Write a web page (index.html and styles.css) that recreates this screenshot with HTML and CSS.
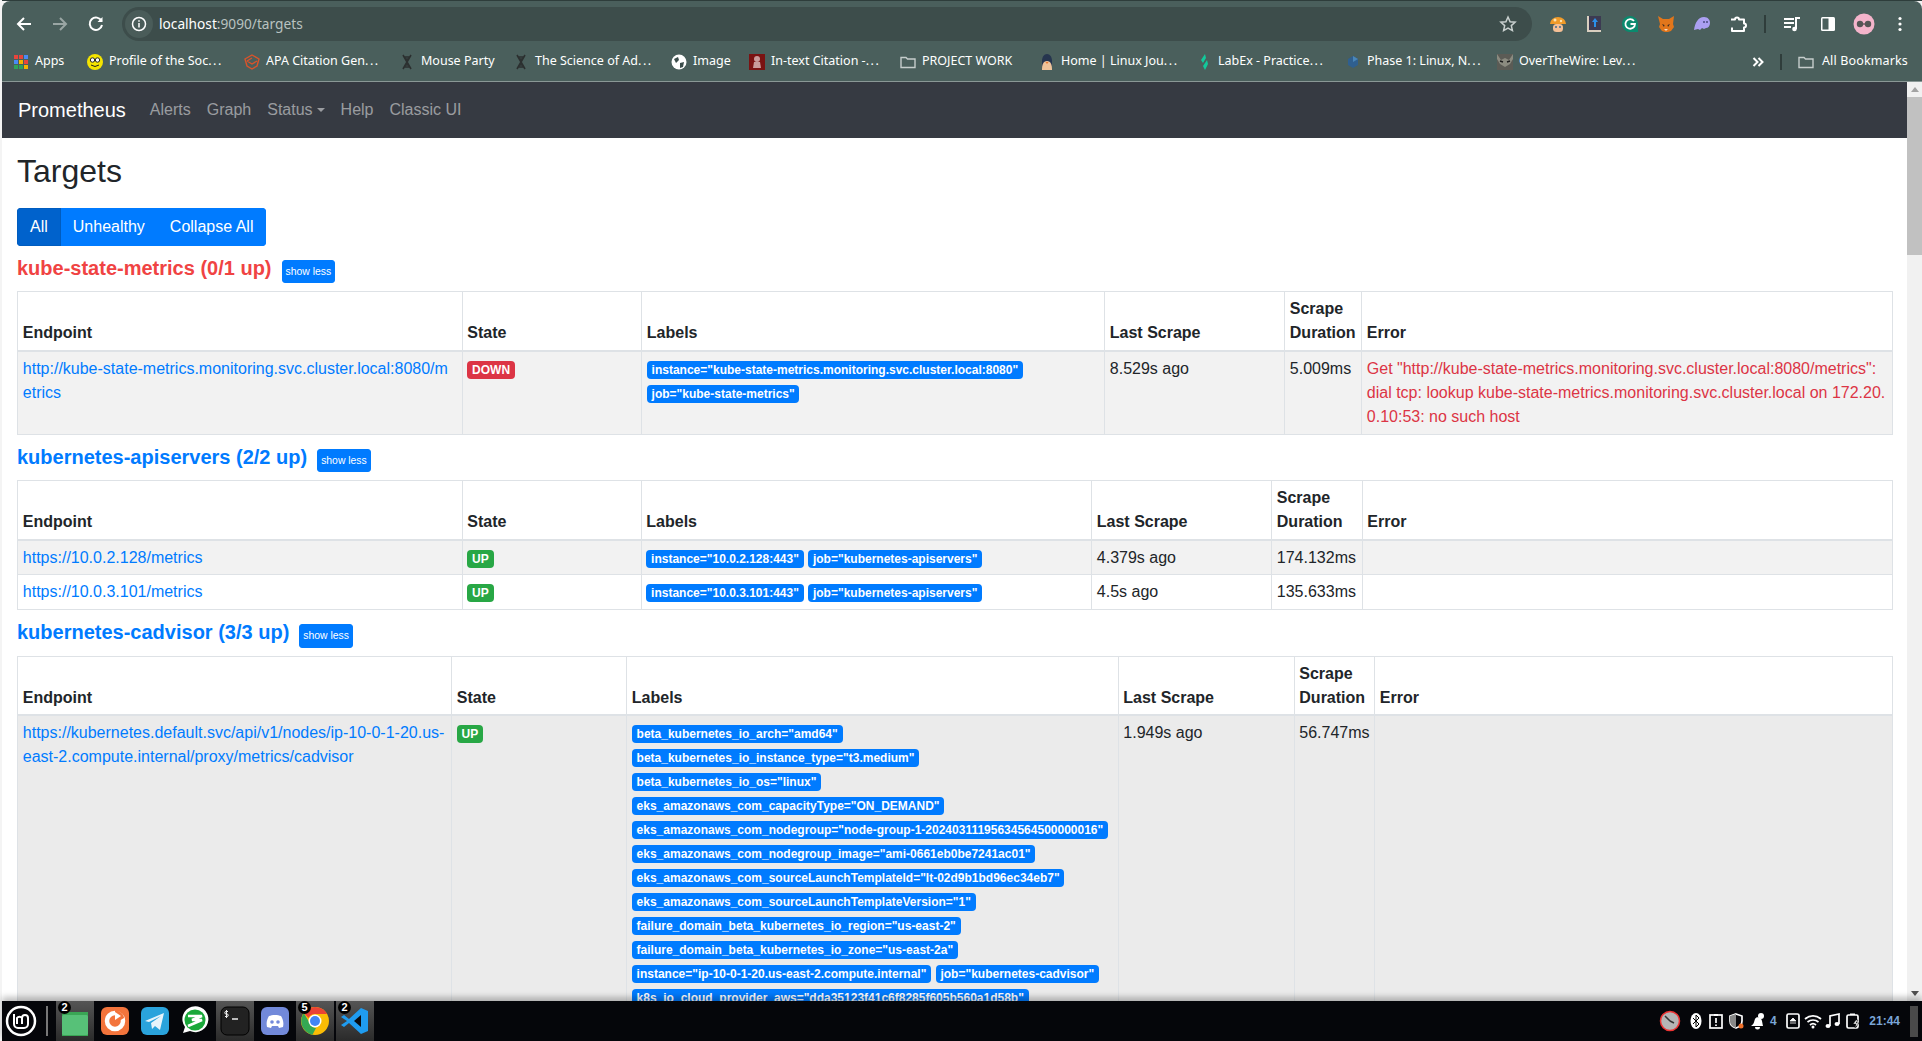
FILE: index.html
```html
<!DOCTYPE html>
<html lang="en">
<head>
  <meta charset="UTF-8" />
  <title>Prometheus Time Series Collection and Processing Server</title>
  <link rel="stylesheet" href="styles.css">
</head>
<body>
<div class="screen">

  <!-- Browser toolbar -->
  <div class="top-strip"></div>
  <div class="toolbar">
    <div class="tile"><svg width="18" height="18" viewBox="0 0 18 18"><path d="M16 9H3M9 3L3 9l6 6" class="ic-white"/></svg></div>
    <div class="tile"><svg width="18" height="18" viewBox="0 0 18 18"><path d="M2 9h13M9 3l6 6-6 6" class="ic-dim"/></svg></div>
    <div class="tile"><svg width="18" height="18" viewBox="0 0 18 18"><path d="M14.5 6A6.2 6.2 0 1 0 15 10" class="ic-white"/><path d="M15.5 2v5h-5z" fill="#fff"/></svg></div>
    <div class="address">
      <span class="site-info"><svg width="16" height="16" viewBox="0 0 16 16"><circle cx="8" cy="8" r="6.5" class="ic-thin"/><path d="M8 7v4.5M8 4.2v1.6" class="ic-thin"/></svg></span>
      <span class="url">localhost<span class="url-rest">:9090/targets</span></span>
      <svg class="star" width="18" height="18" viewBox="0 0 18 18"><path d="M9 2l2.1 4.7 5 .5-3.8 3.4 1.1 5L9 13l-4.4 2.6 1.1-5L1.9 7.200l5-.5z" class="ic-star"/></svg>
    </div>
    <div class="tile ext"><svg width="18" height="18" viewBox="0 0 18 18"><path d="M1 9a8 7 0 0 1 16 0z" fill="#f09a28"/><circle cx="6" cy="5" r="1.500" fill="#fde3b0"/><circle cx="12" cy="6" r="1.200" fill="#fde3b0"/><rect x="4" y="9" width="10" height="8" rx="3.500" fill="#f5bf95"/><path d="M6 12h2M10 12h2" stroke="#6d7f8f" stroke-width="2"/></svg></div>
    <div class="tile"><svg width="18" height="18" viewBox="0 0 18 18"><rect x="2" y="1" width="14" height="16" fill="#d9cfc0"/><rect x="4" y="1" width="12" height="14" fill="#3c3a52"/><path d="M10 3l3 4h-2v5H9V7H7z" fill="#2b8fe8"/></svg></div>
    <div class="tile"><svg width="18" height="18" viewBox="0 0 18 18"><path d="M1 9a8 8 0 0 1 16 0v8H9a8 8 0 0 1-8-8z" fill="#0a8a6e"/><path d="M13 6a4.800 4.800 0 1 0 1 3H9.500" fill="none" stroke="#fff" stroke-width="1.800"/></svg></div>
    <div class="tile"><svg width="18" height="18" viewBox="0 0 18 18"><path d="M1 1l5 3h6l5-3-1 8 1 3-3 4-3 1H8l-3-1-3-4 1-3z" fill="#e2761b"/><path d="M5 9l2.500 1L7 12zM13 9l-2.500 1 .5 2z" fill="#3a2a20"/><path d="M7 14h4l-2 2z" fill="#f4d8bd"/></svg></div>
    <div class="tile"><svg width="18" height="18" viewBox="0 0 18 18"><path d="M1 15C2 8 5 2 11 2c4 0 6 3 6 6 0 3-2 5-4 5l-2 1-2-1-2 2-2-1z" fill="#ab9ff2"/><circle cx="11" cy="7" r="1" fill="#4a4a80"/><circle cx="14" cy="7" r="1" fill="#4a4a80"/></svg></div>
    <div class="tile"><svg width="18" height="18" viewBox="0 0 18 18"><path d="M2 4.500h4a2 2 0 0 1 4 0h5v4a2 2 0 0 1 0 4v3.500H3v-3.500" class="ic-white" stroke-linejoin="round"/></svg></div>
    <div class="tool-divider"></div>
    <div class="tile"><svg width="18" height="18" viewBox="0 0 18 18"><path d="M1 4h10M1 8h10M1 12h7" class="ic-white"/><path d="M13 14V3h4" class="ic-white"/><circle cx="11.500" cy="14" r="2.300" fill="#fff"/></svg></div>
    <div class="tile"><svg width="18" height="18" viewBox="0 0 18 18"><rect x="2" y="2" width="14" height="14" rx="1.500" fill="#fff"/><rect x="3.500" y="3.500" width="6" height="11" fill="#4a5f5c"/></svg></div>
    <div class="tile"><svg width="22" height="22" viewBox="0 0 22 22"><circle cx="11" cy="11" r="10.500" fill="#f4b4cb"/><circle cx="7" cy="11" r="3.200" fill="#555"/><circle cx="15" cy="11" r="3.200" fill="#555"/><path d="M10 11h2" stroke="#333"/></svg></div>
    <div class="tile"><svg width="18" height="18" viewBox="0 0 18 18"><circle cx="9" cy="3.500" r="1.600" fill="#fff"/><circle cx="9" cy="9" r="1.600" fill="#fff"/><circle cx="9" cy="14.500" r="1.600" fill="#fff"/></svg></div>
  </div>

  <!-- Bookmarks bar -->
  <div class="bookmarks">
    <div class="bookmark-grid">
      <a class="bookmark"><svg width="16" height="16" viewBox="0 0 16 16"><rect x="1" y="1" width="4" height="4" fill="#e8453c"/><rect x="6" y="1" width="4" height="4" fill="#e8453c"/><rect x="11" y="1" width="4" height="4" fill="#4a8af4"/><rect x="1" y="6" width="4" height="4" fill="#4a8af4"/><rect x="6" y="6" width="4" height="4" fill="#f4b400"/><rect x="11" y="6" width="4" height="4" fill="#e8453c"/><rect x="1" y="11" width="4" height="4" fill="#2fa35a"/><rect x="6" y="11" width="4" height="4" fill="#2fa35a"/><rect x="11" y="11" width="4" height="4" fill="#f4b400"/></svg><span>Apps</span></a>
      <a class="bookmark"><svg width="16" height="16" viewBox="0 0 16 16"><circle cx="8" cy="8" r="8" fill="#f4e400"/><circle cx="5.500" cy="6" r="2.200" fill="#fff" stroke="#222"/><circle cx="10.500" cy="6" r="2.200" fill="#fff" stroke="#222"/><path d="M4 11q4 3 8 0" fill="none" stroke="#222"/></svg><span>Profile of the Soc<span class="ell">...</span></span></a>
      <a class="bookmark"><svg width="16" height="16" viewBox="0 0 16 16"><path d="M8 1l7 4-2 7-5 3-5-3-2-7zM3 7l5 3 5-3M8 4L3 7" fill="none" stroke="#d9542b" stroke-width="1.400"/></svg><span>APA Citation Gen<span class="ell">...</span></span></a>
      <a class="bookmark"><svg width="16" height="16" viewBox="0 0 16 16"><path d="M4 1l8 14M12 1L4 15M5 3h6M6 5h4M6 11h4M5 13h6" fill="none" stroke="#2b2f2f" stroke-width="1.600"/></svg><span>Mouse Party</span></a>
      <a class="bookmark"><svg width="16" height="16" viewBox="0 0 16 16"><path d="M4 1l8 14M12 1L4 15M5 3h6M6 5h4M6 11h4M5 13h6" fill="none" stroke="#2b2f2f" stroke-width="1.600"/></svg><span>The Science of Ad<span class="ell">...</span></span></a>
      <a class="bookmark"><svg width="16" height="16" viewBox="0 0 16 16"><circle cx="8" cy="8" r="7.500" fill="#fff"/><path d="M3 5l4-2 1 3-3 3zM9 9l4-1-1 5-3 1z" fill="#3b4d4b"/></svg><span>Image</span></a>
      <a class="bookmark"><svg width="16" height="16" viewBox="0 0 16 16"><rect width="16" height="16" fill="#7a1212"/><circle cx="8" cy="5" r="3" fill="#c99a9a"/><path d="M4 14l1-6h6l1 6z" fill="#c99a9a"/></svg><span>In-text Citation -<span class="ell">...</span></span></a>
      <a class="bookmark"><svg width="16" height="16" viewBox="0 0 16 16"><path d="M1 3.500h5l1.500 1.500h7.500v8.500H1z" class="ic-folder"/></svg><span>PROJECT WORK</span></a>
      <a class="bookmark"><svg width="16" height="16" viewBox="0 0 16 16"><path d="M8 0c3 0 5 3 5 7v5H3V7c0-4 2-7 5-7z" fill="#26354f"/><path d="M3 16c0-5 1-9 5-9s5 4 5 9z" fill="#eec39a"/><path d="M6.500 8h3L8 10z" fill="#e8772e"/></svg><span>Home | Linux Jou<span class="ell">...</span></span></a>
      <a class="bookmark"><svg width="16" height="16" viewBox="0 0 16 16"><path d="M9 0L5 6l2 3 3-5zM11 6l-4 6 2 4 3-6z" fill="#12c99b"/></svg><span>LabEx - Practice<span class="ell">...</span></span></a>
      <a class="bookmark"><svg width="16" height="16" viewBox="0 0 16 16"><path d="M8 2l5 3v6l-5 3-5-3V5z" fill="#2f5f8f"/><path d="M8 2v6l5-3" fill="#4a86b8"/></svg><span>Phase 1: Linux, N<span class="ell">...</span></span></a>
      <a class="bookmark"><svg width="16" height="16" viewBox="0 0 16 16"><rect width="16" height="16" fill="#5b5b55"/><path d="M0 0l4 6 4-2 4 2 4-6v5l-3 5-5 3-5-3-3-5z" fill="#8b8b80"/><path d="M3 7l3 1M13 7l-3 1" stroke="#1c1c1c" stroke-width="1.500"/></svg><span>OverTheWire: Lev<span class="ell">...</span></span></a>
    </div>
    <div class="bookmarks-end">
      <svg width="12" height="12" viewBox="0 0 12 12"><path d="M1.500 2l4 4-4 4M6.500 2l4 4-4 4" class="ic-white"/></svg>
      <span class="marks-divider"></span>
      <a class="bookmark marks-all"><svg width="16" height="16" viewBox="0 0 16 16"><path d="M1 3.500h5l1.500 1.500h7.500v8.500H1z" class="ic-folder"/></svg><span>All Bookmarks</span></a>
    </div>
  </div>

  <!-- Page and its scrollbar -->
  <div class="viewport">
    <div class="page">
      <nav class="navbar">
        <span class="brand">Prometheus</span>
        <a class="nav-link">Alerts</a>
        <a class="nav-link">Graph</a>
        <a class="nav-link">Status<span class="caret"></span></a>
        <a class="nav-link">Help</a>
        <a class="nav-link">Classic UI</a>
      </nav>

      <div class="container">
        <h1>Targets</h1>
        <div class="btn-group">
          <button class="btn btn-active">All</button><button class="btn">Unhealthy</button><button class="btn">Collapse All</button>
        </div>

        <div class="pool-head">
          <a class="pool-title pool-down">kube-state-metrics (0/1 up)</a>
          <button class="show-less">show less</button>
        </div>
        <table class="targets">
          <colgroup><col class="a1"><col class="a2"><col class="a3"><col class="a4"><col class="a5"><col class="a6"></colgroup>
          <thead><tr><th>Endpoint</th><th>State</th><th>Labels</th><th>Last Scrape</th><th>Scrape Duration</th><th>Error</th></tr></thead>
          <tbody>
            <tr class="striped">
              <td class="breaks"><a class="endpoint">http://kube-state-metrics.monitoring.svc.cluster.local:8080/metrics</a></td>
              <td><span class="badge badge-down">DOWN</span></td>
              <td><span class="badge">instance="kube-state-metrics.monitoring.svc.cluster.local:8080"</span> <span class="badge">job="kube-state-metrics"</span></td>
              <td>8.529s ago</td>
              <td>5.009ms</td>
              <td class="breaks error">Get "http://kube-state-metrics.monitoring.svc.cluster.local:8080/metrics": dial tcp: lookup kube-state-metrics.monitoring.svc.cluster.local on 172.20.0.10:53: no such host</td>
            </tr>
          </tbody>
        </table>

        <div class="pool-head">
          <a class="pool-title">kubernetes-apiservers (2/2 up)</a>
          <button class="show-less">show less</button>
        </div>
        <table class="targets">
          <colgroup><col class="b1"><col class="b2"><col class="b3"><col class="b4"><col class="b5"><col class="b6"></colgroup>
          <thead><tr><th>Endpoint</th><th>State</th><th>Labels</th><th>Last Scrape</th><th>Scrape Duration</th><th>Error</th></tr></thead>
          <tbody>
            <tr class="striped">
              <td class="breaks"><a class="endpoint">https://10.0.2.128/metrics</a></td>
              <td><span class="badge badge-up">UP</span></td>
              <td><span class="badge">instance="10.0.2.128:443"</span> <span class="badge">job="kubernetes-apiservers"</span></td>
              <td>4.379s ago</td>
              <td>174.132ms</td>
              <td></td>
            </tr>
            <tr>
              <td class="breaks"><a class="endpoint">https://10.0.3.101/metrics</a></td>
              <td><span class="badge badge-up">UP</span></td>
              <td><span class="badge">instance="10.0.3.101:443"</span> <span class="badge">job="kubernetes-apiservers"</span></td>
              <td>4.5s ago</td>
              <td>135.633ms</td>
              <td></td>
            </tr>
          </tbody>
        </table>

        <div class="pool-head">
          <a class="pool-title">kubernetes-cadvisor (3/3 up)</a>
          <button class="show-less">show less</button>
        </div>
        <table class="targets">
          <colgroup><col class="c1"><col class="c2"><col class="c3"><col class="c4"><col class="c5"><col class="c6"></colgroup>
          <thead><tr><th>Endpoint</th><th>State</th><th>Labels</th><th>Last Scrape</th><th>Scrape Duration</th><th>Error</th></tr></thead>
          <tbody>
            <tr class="hovered">
              <td class="breaks"><a class="endpoint">https://kubernetes.default.svc/api/v1/nodes/ip-10-0-1-20.us-east-2.compute.internal/proxy/metrics/cadvisor</a></td>
              <td><span class="badge badge-up">UP</span></td>
              <td>
                <span class="badge">beta_kubernetes_io_arch="amd64"</span>
                <span class="badge">beta_kubernetes_io_instance_type="t3.medium"</span>
                <span class="badge">beta_kubernetes_io_os="linux"</span>
                <span class="badge">eks_amazonaws_com_capacityType="ON_DEMAND"</span>
                <span class="badge">eks_amazonaws_com_nodegroup="node-group-1-20240311195634564500000016"</span>
                <span class="badge">eks_amazonaws_com_nodegroup_image="ami-0661eb0be7241ac01"</span>
                <span class="badge">eks_amazonaws_com_sourceLaunchTemplateId="lt-02d9b1bd96ec34eb7"</span>
                <span class="badge">eks_amazonaws_com_sourceLaunchTemplateVersion="1"</span>
                <span class="badge">failure_domain_beta_kubernetes_io_region="us-east-2"</span>
                <span class="badge">failure_domain_beta_kubernetes_io_zone="us-east-2a"</span>
                <span class="badge">instance="ip-10-0-1-20.us-east-2.compute.internal"</span>
                <span class="badge">job="kubernetes-cadvisor"</span>
                <span class="badge">k8s_io_cloud_provider_aws="dda35123f41c6f8285f605b560a1d58b"</span>
              </td>
              <td>1.949s ago</td>
              <td>56.747ms</td>
              <td></td>
            </tr>
          </tbody>
        </table>
      </div>
    </div>

    <div class="scrollbar">
      <div class="arrow-up"></div>
      <div class="thumb"></div>
      <div class="arrow-down"></div>
    </div>
  </div>

  <!-- Desktop panel -->
  <div class="dock">
    <div class="dock-logo"><svg width="32" height="32" viewBox="0 0 32 32"><circle cx="16" cy="16" r="14" fill="none" stroke="#fff" stroke-width="2.500"/><path d="M9 9v10a4 4 0 0 0 4 4h6a4 4 0 0 0 4-4v-6a3 3 0 0 0-6 0v6M17 13a3 3 0 0 0-5 0v6" fill="none" stroke="#fff" stroke-width="2"/></svg></div>
    <div class="dock-divider"></div>
    <div class="dock-tile dock-active"><span class="dock-count">2</span><svg width="30" height="30" viewBox="0 0 30 30"><path d="M2 6l5-3 3 3h18v24H2z" fill="#3aa655"/><rect x="2" y="9" width="26" height="20" rx="1.500" fill="#57c178"/></svg></div>
    <div class="dock-tile"><svg width="30" height="30" viewBox="0 0 30 30"><rect x="1" y="1" width="28" height="28" rx="6" fill="#f3743c"/><circle cx="15" cy="15" r="8" fill="none" stroke="#fff" stroke-width="4.500"/><path d="M15 4c5 1 9 4 9 8l-5 3c-1-3-2-4-4-4z" fill="#f3743c"/><path d="M15 6l6 4-6 4z" fill="#fff"/></svg></div>
    <div class="dock-tile"><svg width="30" height="30" viewBox="0 0 30 30"><rect x="1" y="1" width="28" height="28" rx="6" fill="#2aa3dc"/><path d="M5 15l19-8-4 17-5-4-3 3-1-6 10-7-12 6z" fill="#e8f4fb"/></svg></div>
    <div class="dock-tile"><svg width="30" height="30" viewBox="0 0 30 30"><path d="M3 27l2-6a13 13 0 1 1 5 4z" fill="#fff"/><circle cx="15" cy="14" r="10.500" fill="#1aa83a"/><path d="M8 10h14l-10 4h10l-14 6" fill="none" stroke="#fff" stroke-width="2.500"/></svg></div>
    <div class="dock-tile dock-active"><svg width="30" height="30" viewBox="0 0 30 30"><rect x="1" y="1" width="28" height="28" rx="6" fill="#222" stroke="#000"/><path d="M12 13h6" stroke="#eee" stroke-width="1.500"/><path d="M8 5.500H6a1 1 0 0 0 0 2.500h1a1 1 0 0 1 0 2.500H5M6.500 4v8" fill="none" stroke="#eee"/></svg></div>
    <div class="dock-tile"><svg width="30" height="30" viewBox="0 0 30 30"><rect x="1" y="1" width="28" height="28" rx="6" fill="#7289da"/><path d="M7 21c-1-4 0-8 2-11 3-1.500 9-1.500 12 0 2 3 3 7 2 11l-4 1-1-2h-6l-1 2z" fill="#fff"/><circle cx="12" cy="16" r="1.800" fill="#7289da"/><circle cx="18" cy="16" r="1.800" fill="#7289da"/></svg></div>
    <div class="dock-tile dock-active"><span class="dock-count">5</span><svg width="30" height="30" viewBox="0 0 30 30"><circle cx="15" cy="15" r="14" fill="#fbbc05"/><path d="M15 1a14 14 0 0 1 12.100 7H15a7 7 0 0 0-6.500 4L3.800 7A14 14 0 0 1 15 1z" fill="#ea4335"/><path d="M3.800 7l5.900 10a7 7 0 0 0 6.300 5l-3.500 6.800A14 14 0 0 1 3.800 7z" fill="#34a853"/><circle cx="15" cy="15" r="6.500" fill="#fff"/><circle cx="15" cy="15" r="5" fill="#4285f4"/></svg></div>
    <div class="dock-tile dock-active"><span class="dock-count">2</span><svg width="30" height="30" viewBox="0 0 30 30"><path d="M21 2l7 3v20l-7 3L9 17l-5 4-3-2 6-4-6-4 3-2 5 4z" fill="#1f9cf0"/><path d="M21 9l-7 6 7 6z" fill="#0b0c10"/></svg></div>

    <div class="tray">
      <svg class="tray-clock" width="22" height="22" viewBox="0 0 22 22"><circle cx="11" cy="11" r="9.500" fill="#b5b5b5" stroke="#e33" stroke-width="1.500"/><path d="M11 11L6 6M11 11l4 2" stroke="#333" stroke-width="1.500"/></svg>
      <svg class="tray-icon" width="20" height="20" viewBox="0 0 20 20"><ellipse cx="10" cy="10" rx="5.500" ry="8" fill="#fff"/><path d="M7 7l6 6-3 3V4l3 3-6 6" fill="none" stroke="#000"/></svg>
      <svg class="tray-icon" width="20" height="20" viewBox="0 0 20 20"><rect x="4" y="4" width="12" height="13" class="tray-line"/><path d="M8 3h4v2H8z" fill="#fff"/><path d="M10 7v5M10 13.500v1.500" class="tray-line"/></svg>
      <svg class="tray-icon" width="20" height="20" viewBox="0 0 20 20"><path d="M10 3l6 2v5c0 4-3 6-6 7-3-1-6-3-6-7V5z" class="tray-line"/><path d="M10 3v14c-3-1-6-3-6-7V5z" fill="#888"/><circle cx="15" cy="15" r="2.500" fill="#f0702a"/></svg>
      <svg class="tray-icon tray-bell" width="20" height="20" viewBox="0 0 20 20"><path d="M3 15c3-2 3-4 4-7 1-2 3-2 5-1 2 1 2 3 3 8z" fill="#fff"/><circle cx="13" cy="5" r="3" fill="#fff"/><path d="M7 16a2.500 2.500 0 0 0 5 0z" fill="#fff"/></svg>
      <span class="tray-count">4</span>
      <svg class="tray-icon" width="20" height="20" viewBox="0 0 20 20"><rect x="4" y="3" width="12" height="14" rx="1.500" class="tray-line"/><path d="M10 7l3 3H7zM7 12h6" fill="#fff" stroke="#fff" stroke-width=".8"/></svg>
      <svg class="tray-icon" width="20" height="20" viewBox="0 0 20 20"><path d="M2 8a12 12 0 0 1 16 0M4.500 11a8.500 8.500 0 0 1 11 0M7 14a4.500 4.500 0 0 1 6 0" class="tray-line"/><circle cx="10" cy="16" r="1.500" fill="#fff"/></svg>
      <svg class="tray-icon" width="20" height="20" viewBox="0 0 20 20"><path d="M7 15V5l9-2v10" class="tray-line"/><ellipse cx="5" cy="15" rx="2.500" ry="2" fill="#fff"/><ellipse cx="14" cy="13" rx="2.500" ry="2" fill="#fff"/></svg>
      <svg class="tray-icon" width="20" height="20" viewBox="0 0 20 20"><rect x="4" y="4" width="11" height="13" rx="1.500" class="tray-line"/><path d="M7 2.500h5V4H7z" fill="#fff"/><path d="M13 9l-3 4h3l-1 4 4-5h-3l2-3z" fill="#fff" stroke="#000" stroke-width=".5"/></svg>
      <span class="clock">21:44</span>
      <span class="panel-handle"></span>
    </div>
  </div>

</div>
</body>
</html>
```

FILE: styles.css
```css
* {
  box-sizing: border-box;
}

html, body {
  margin: 0;
  height: 100%;
  overflow: hidden;
}

body {
  font-family: "Liberation Sans", Arial, sans-serif;
  font-size: 16px;
  line-height: 1.5;
  color: #212529;
  background-color: #fff;
}

.screen {
  display: flex;
  flex-direction: column;
  width: 1922px;
  height: 1041px;
  padding-left: 2px;
  background-color: #f4f4f4;
}

/* Browser toolbar */
.top-strip {
  height: 1px;
  background-color: #2e3d3b;
}

.toolbar {
  display: flex;
  align-items: center;
  height: 40px;
  padding: 6px 0 0 4px;
  background-color: #4a5f5c;
  border-radius: 8px 8px 0 0;
}

.tile {
  display: flex;
  align-items: center;
  justify-content: center;
  width: 36px;
  height: 34px;
  flex: none;
}

.ic-white, .ic-dim, .ic-thin, .ic-star {
  fill: none;
  stroke: #fff;
  stroke-width: 2;
}

.ic-dim {
  stroke: #9aa6a4;
}

.ic-thin {
  stroke-width: 1.5;
}

.ic-star {
  stroke: #c9d0cf;
  stroke-width: 1.5;
}

.address {
  display: flex;
  align-items: center;
  width: 1410px;
  height: 34px;
  margin: 0 8px;
  padding: 0 15px 0 3px;
  flex: none;
  background-color: #3d4d4b;
  border-radius: 17px;
}

.site-info {
  display: flex;
  align-items: center;
  justify-content: center;
  width: 28px;
  height: 28px;
  border-radius: 50%;
  background-color: #4a5c59;
}

.url {
  margin-left: 6px;
  font-family: "Noto Sans", sans-serif;
  font-size: 13.7px;
  color: #fff;
}

.url-rest {
  color: #b9c2c0;
}

.star {
  margin-left: auto;
}

.tool-divider {
  width: 2px;
  height: 18px;
  margin: 0 8px;
  flex: none;
  background-color: #2f3d3b;
}

/* Bookmarks bar */
.bookmarks {
  display: flex;
  align-items: center;
  height: 41px;
  padding: 1px 14px 0 11px;
  background-color: #4a5f5c;
  border-bottom: 1px solid #8a9896;
}

.bookmark-grid {
  display: grid;
  grid-template-columns: 74px 157px 155px 114px 158px 78px 151px 139px 157px 149px 152px 160px;
}

.bookmark {
  display: flex;
  align-items: center;
  gap: 6px;
  font-family: "Noto Sans", sans-serif;
  font-size: 12.5px;
  color: #fff;
  white-space: nowrap;
}

.ell {
  letter-spacing: 1.6px;
}

.marks-all {
  gap: 8px;
  letter-spacing: 0.15px;
}

.ic-folder {
  fill: none;
  stroke: #c6cdcc;
  stroke-width: 1.4;
}

.bookmarks-end {
  display: flex;
  align-items: center;
  margin-left: auto;
}

.marks-divider {
  width: 2px;
  height: 16px;
  margin: 0 16px;
  background-color: #2f3d3b;
}

/* Page */
.viewport {
  display: flex;
  flex: 1;
  min-height: 0;
  overflow: hidden;
}

.page {
  flex: 1;
  min-width: 0;
  overflow: hidden;
  background-color: #fff;
}

.navbar {
  display: flex;
  align-items: center;
  height: 56px;
  padding: 0 16px;
  background-color: #363a42;
}

.brand {
  margin-right: 16px;
  font-size: 20px;
  color: #fff;
}

.nav-link {
  padding: 0 8px;
  color: rgba(255, 255, 255, 0.5);
}

.caret {
  display: inline-block;
  margin-left: 4px;
  vertical-align: 3px;
  border-top: 4.8px solid;
  border-left: 4.8px solid transparent;
  border-right: 4.8px solid transparent;
}

.container {
  padding: 0 15px;
}

h1 {
  margin: 14px 0 17.6px;
  font-size: 32px;
  font-weight: 500;
  line-height: 1.2;
}

.btn-group {
  display: flex;
  width: max-content;
  margin-bottom: 9.8px;
  border-radius: 4px;
  overflow: hidden;
}

.btn {
  height: 38px;
  padding: 0 12px;
  font-family: inherit;
  font-size: 16px;
  color: #fff;
  background-color: #007bff;
  border: 1px solid #007bff;
}

.btn + .btn {
  margin-left: -1px;
}

.btn-active {
  position: relative;
  background-color: #0062cc;
  border-color: #005cbf;
}

.pool-head {
  display: flex;
  align-items: baseline;
  margin-bottom: 8px;
}

.pool-title {
  font-size: 20px;
  font-weight: bold;
  line-height: 24px;
  color: #007bff;
}

.pool-down {
  color: #f04343;
}

.show-less {
  height: 23.6px;
  margin-left: 10px;
  padding: 3px;
  font-family: inherit;
  font-size: 10.4px;
  line-height: 15.6px;
  color: #fff;
  background-color: #007bff;
  border: 1px solid #007bff;
  border-radius: 3px;
}

/* Tables */
.targets {
  width: 1874.5px;
  margin-bottom: 10.1px;
  table-layout: fixed;
  border-collapse: collapse;
}

.targets th, .targets td {
  padding: 4.8px;
  text-align: left;
  vertical-align: top;
  border: 1px solid #dee2e6;
}

.targets th {
  vertical-align: bottom;
  border-bottom-width: 2px;
}

.striped td {
  background-color: #f2f2f2;
}

.hovered td {
  background-color: #ebebeb;
}

.breaks {
  word-break: break-all;
}

.endpoint {
  color: #007bff;
}

.error {
  color: #dc3545;
}

.a1 { width: 444.5px; }
.a2 { width: 179.5px; }
.a3 { width: 463px; }
.a4 { width: 180px; }
.a5 { width: 77px; }
.a6 { width: 530.5px; }

.b1 { width: 444.5px; }
.b2 { width: 179px; }
.b3 { width: 450.5px; }
.b4 { width: 180px; }
.b5 { width: 90.5px; }
.b6 { width: 530px; }

.c1 { width: 434px; }
.c2 { width: 175px; }
.c3 { width: 491.5px; }
.c4 { width: 176px; }
.c5 { width: 80.5px; }
.c6 { width: 517.5px; }

.badge {
  display: inline-block;
  padding: 3px 4.8px;
  font-size: 12px;
  font-weight: bold;
  line-height: 1;
  color: #fff;
  white-space: nowrap;
  vertical-align: baseline;
  background-color: #007bff;
  border-radius: 4px;
}

.badge-down {
  background-color: #dc3545;
}

.badge-up {
  background-color: #28a745;
}

/* Scrollbar */
.scrollbar {
  display: flex;
  flex-direction: column;
  align-items: center;
  width: 15px;
  flex: none;
  background-color: #f1f1f1;
}

.arrow-up, .arrow-down {
  width: 0;
  height: 0;
  margin: 5px 0;
  border-left: 4px solid transparent;
  border-right: 4px solid transparent;
}

.arrow-up {
  border-bottom: 5px solid #a3a3a3;
}

.arrow-down {
  margin-top: auto;
  border-top: 5px solid #505050;
}

.thumb {
  width: 100%;
  height: 158px;
  background-color: #c1c1c1;
}

/* Desktop panel */
.dock {
  position: relative;
  display: flex;
  align-items: center;
  height: 40px;
  flex: none;
  background-color: #05060a;
  box-shadow: 0 -4px 6px rgba(0, 0, 0, 0.25);
}

.dock-logo {
  display: flex;
  align-items: center;
  justify-content: center;
  width: 38px;
}

.dock-divider {
  width: 2px;
  height: 30px;
  margin: 0 7px 0 6px;
  background-color: #777;
}

.dock-tile {
  position: relative;
  display: flex;
  align-items: center;
  justify-content: center;
  width: 40px;
  height: 40px;
  flex: none;
}

.dock-active {
  background-image: linear-gradient(#555, #2a2a2a);
  border-left: 1px solid #05060a;
  border-right: 1px solid #05060a;
}

.dock-count {
  position: absolute;
  top: 0;
  left: 2px;
  width: 13px;
  height: 13px;
  font-size: 11px;
  font-weight: bold;
  line-height: 13px;
  text-align: center;
  color: #fff;
  background-color: #000;
  border-radius: 50%;
  z-index: 1;
}

.tray {
  display: flex;
  align-items: center;
  margin-left: auto;
  padding-right: 4px;
}

.tray-clock {
  margin-right: 5px;
}

.tray-line {
  fill: none;
  stroke: #fff;
  stroke-width: 1.7;
}

.tray-bell {
  margin-left: 2px;
}

.tray-count {
  width: 10px;
  margin-right: 5px;
  font-size: 12px;
  font-weight: bold;
  text-align: center;
  color: #7aa5d6;
}

.clock {
  margin-left: 6px;
  font-size: 12px;
  font-weight: bold;
  color: #7aa5d6;
}

.panel-handle {
  width: 8px;
  height: 31px;
  margin-left: 10px;
  background-color: #4a4a4a;
}
```
